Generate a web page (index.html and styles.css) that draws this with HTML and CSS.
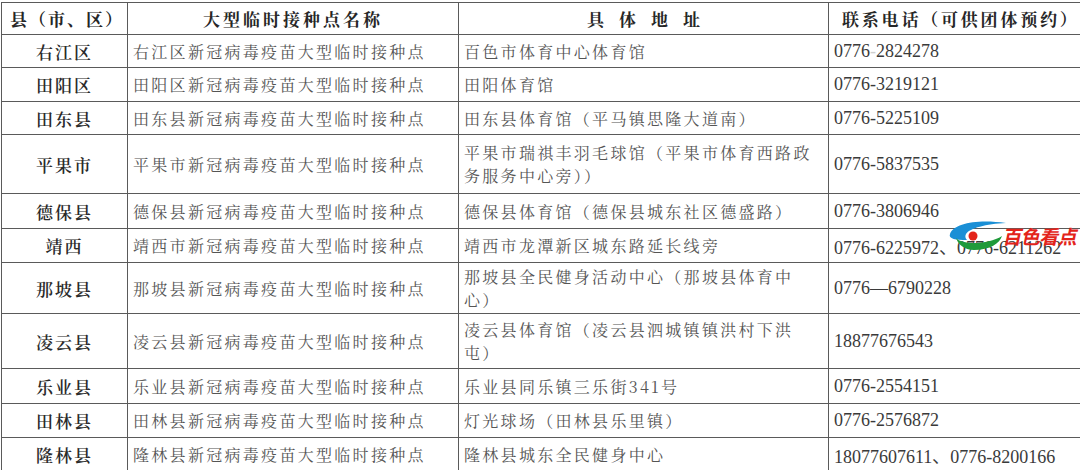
FILE: index.html
```html
<!DOCTYPE html>
<html lang="zh-CN">
<head>
<meta charset="utf-8">
<title>大型临时接种点</title>
<link rel="stylesheet" href="styles.css">
</head>
<body>
<div class="page">
  <table class="tbl">
    <colgroup>
      <col class="w1"><col class="w2"><col class="w3"><col class="w4">
    </colgroup>
    <thead>
      <tr class="h32">
        <th class="hd-county">县（市、区）</th>
        <th class="hd-center">大型临时接种点名称</th>
        <th class="hd-center hd-wide">具体地址</th>
        <th class="hd-left">联系电话（可供团体预约）</th>
      </tr>
    </thead>
    <tbody>
      <tr class="h33">
        <td class="county">右江区</td>
        <td class="name">右江区新冠病毒疫苗大型临时接种点</td>
        <td class="addr">百色市体育中心体育馆</td>
        <td class="phone">0776<span class="faint">-</span>2824278</td>
      </tr>
      <tr class="h34">
        <td class="county">田阳区</td>
        <td class="name">田阳区新冠病毒疫苗大型临时接种点</td>
        <td class="addr">田阳体育馆</td>
        <td class="phone">0776-3219121</td>
      </tr>
      <tr class="h33">
        <td class="county">田东县</td>
        <td class="name">田东县新冠病毒疫苗大型临时接种点</td>
        <td class="addr">田东县体育馆（平马镇思隆大道南）</td>
        <td class="phone">0776-5225109</td>
      </tr>
      <tr class="h59">
        <td class="county">平果市</td>
        <td class="name">平果市新冠病毒疫苗大型临时接种点</td>
        <td class="addr">平果市瑞祺丰羽毛球馆（平果市体育西路政务服务中心旁））</td>
        <td class="phone">0776-5837535</td>
      </tr>
      <tr class="h35">
        <td class="county">德保县</td>
        <td class="name">德保县新冠病毒疫苗大型临时接种点</td>
        <td class="addr">德保县体育馆（德保县城东社区德盛路）</td>
        <td class="phone">0776-3806946</td>
      </tr>
      <tr class="h34">
        <td class="county">靖西</td>
        <td class="name">靖西市新冠病毒疫苗大型临时接种点</td>
        <td class="addr">靖西市龙潭新区城东路延长线旁</td>
        <td class="phone">0776-6225972、0776-6211262</td>
      </tr>
      <tr class="h51">
        <td class="county">那坡县</td>
        <td class="name">那坡县新冠病毒疫苗大型临时接种点</td>
        <td class="addr">那坡县全民健身活动中心（那坡县体育中心）</td>
        <td class="phone">0776—6790228</td>
      </tr>
      <tr class="h55">
        <td class="county">凌云县</td>
        <td class="name">凌云县新冠病毒疫苗大型临时接种点</td>
        <td class="addr">凌云县体育馆（凌云县泗城镇镇洪村下洪屯）</td>
        <td class="phone">18877676543</td>
      </tr>
      <tr class="h35">
        <td class="county">乐业县</td>
        <td class="name">乐业县新冠病毒疫苗大型临时接种点</td>
        <td class="addr">乐业县同乐镇三乐街341号</td>
        <td class="phone">0776-2554151</td>
      </tr>
      <tr class="h34">
        <td class="county">田林县</td>
        <td class="name">田林县新冠病毒疫苗大型临时接种点</td>
        <td class="addr">灯光球场（田林县乐里镇）</td>
        <td class="phone">0776-2576872</td>
      </tr>
      <tr class="h34">
        <td class="county">隆林县</td>
        <td class="name">隆林县新冠病毒疫苗大型临时接种点</td>
        <td class="addr">隆林县城东全民健身中心</td>
        <td class="phone">18077607611、0776-8200166</td>
      </tr>
    </tbody>
  </table>

  <div class="watermark">
    <svg class="wm-logo" width="60" height="34" viewBox="0 0 60 34">
      <path d="M2 15 C6 4 30 0 58 4 C38 5 22 9 18 15 C17 17 17 19 19 21 C8 21 0 20 2 15 Z" fill="#1a8fd6"/>
      <circle cx="25" cy="17" r="4.5" fill="#e3241b"/>
      <path d="M8 19 C14 26 40 26 54 17 C52 24 42 31 26 31 C16 31 10 25 8 19 Z" fill="#1f9a3a"/>
    </svg>
    <span class="wm-text">百色看点</span>
  </div>
</div>
</body>
</html>
```

FILE: styles.css
```css
html, body {
  margin: 0;
  padding: 0;
  background: #ffffff;
}

.page {
  position: relative;
  width: 1080px;
  height: 470px;
  overflow: hidden;
  padding: 2px 0 0 1px;
  box-sizing: border-box;
}

.tbl {
  border-collapse: collapse;
  table-layout: fixed;
  width: 1100px;
  font-family: "Noto Serif CJK SC", "Noto Sans CJK SC", serif;
  color: #555;
}

.w1 { width: 126px; }
.w2 { width: 331px; }
.w3 { width: 370px; }
.w4 { width: 273px; }

.tbl th,
.tbl td {
  border: 1px solid #5a5a5a;
  padding: 0 5px;
  vertical-align: middle;
  white-space: nowrap;
  overflow: hidden;
}

.tbl td:nth-child(4) {
  border-left-color: #c4c4c4;
}

.h32 { height: 32px; }
.h33 { height: 33px; }
.h34 { height: 34px; }
.h35 { height: 35px; }
.h51 { height: 51px; }
.h55 { height: 55px; }
.h59 { height: 59px; }

.tbl th {
  font-size: 17px;
  font-weight: 700;
  color: #262626;
  letter-spacing: 3px;
}

.hd-county {
  text-align: left;
  padding-left: 8px !important;
  letter-spacing: 2px !important;
}

.hd-center { text-align: center; }
.hd-wide { letter-spacing: 15px !important; padding-left: 20px !important; }
.hd-left { text-align: left; padding-left: 13px !important; letter-spacing: 2.8px !important; }

.county {
  text-align: center;
  font-size: 17px;
  font-weight: 600;
  color: #2a2a2a;
  letter-spacing: 2px;
}

.name,
.addr {
  font-size: 16px;
  letter-spacing: 2.3px;
  color: #555;
}

.tbl td.addr {
  white-space: normal;
  line-height: 23px;
  padding-right: 16px;
}

.phone {
  font-family: "Liberation Serif", serif;
  font-size: 18px;
  color: #3a3a3a;
}

.faint { color: #cfcfcf; }

.watermark {
  position: absolute;
  left: 948px;
  top: 219px;
  display: flex;
  align-items: center;
}

.wm-logo {
  display: block;
  margin-right: -4px;
}

.wm-text {
  font-family: "Noto Sans CJK SC", sans-serif;
  font-size: 19px;
  font-weight: 700;
  color: #e3241b;
  letter-spacing: -0.5px;
  transform: skewX(-12deg);
  margin-top: -2px;
}
```
